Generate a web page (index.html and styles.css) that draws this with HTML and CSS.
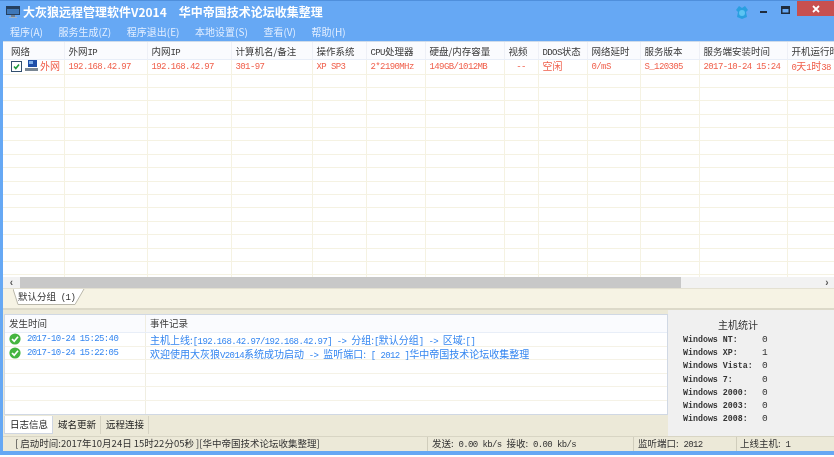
FILE: index.html
```html
<!DOCTYPE html>
<html lang="zh-CN">
<head>
<meta charset="utf-8">
<title>大灰狼远程管理软件V2014</title>
<link rel="stylesheet" href="styles.css">
</head>
<body>
<div class="window">
  <header class="titlebar">
    <svg class="logo" width="14" height="12" viewBox="0 0 14 12"><rect x="0" y="0" width="14" height="9" fill="#26405f"/><rect x="1" y="3" width="12" height="5" fill="#3f78b8"/><rect x="5" y="9" width="4" height="2" fill="#6d7f92"/><rect x="3" y="11" width="8" height="1" fill="#9fb1c4"/></svg>
    <span class="title">大灰狼远程管理软件V2014　华中帝国技术论坛收集整理</span>
    <div class="controls">
      <svg class="skin" width="14" height="15" viewBox="0 0 14 15"><path d="M4 1 L7 3 L10 1 L13 5 L11 7 L12 12 L7 14 L2 12 L3 7 L1 5 Z" fill="#2a9fe0"/><circle cx="7" cy="8" r="3" fill="#5cc4f2"/></svg>
      <svg class="min" width="7" height="2" viewBox="0 0 7 2"><rect width="7" height="2" fill="#1f2c3d"/></svg>
      <svg class="max" width="9" height="8" viewBox="0 0 9 8"><rect x=".75" y=".75" width="7.5" height="6.5" fill="none" stroke="#1f2c3d" stroke-width="1.5"/><rect x="1" y="1" width="7" height="2" fill="#1f2c3d"/></svg>
      <div class="close"><svg width="8" height="8" viewBox="0 0 8 8"><path d="M1 1 L7 7 M7 1 L1 7" stroke="#fff" stroke-width="1.8"/></svg></div>
    </div>
  </header>
  <nav class="menubar">
    <span>程序(A)</span><span>服务生成(Z)</span><span>程序退出(E)</span><span>本地设置(S)</span><span>查看(V)</span><span>帮助(H)</span>
  </nav>
  <main class="content">
    <div class="host-area">
      <table class="grid">
        <colgroup>
          <col class="c1"><col class="c2"><col class="c3"><col class="c4"><col class="c5"><col class="c6"><col class="c7"><col class="c8"><col class="c9"><col class="c10"><col class="c11"><col class="c12"><col class="c13">
        </colgroup>
        <thead>
          <tr><th class="first">网络</th><th>外网<i>IP</i></th><th>内网<i>IP</i></th><th>计算机名/备注</th><th>操作系统</th><th><i>CPU</i>处理器</th><th>硬盘/内存容量</th><th>视频</th><th><i>DDOS</i>状态</th><th>网络延时</th><th>服务版本</th><th>服务端安装时间</th><th>开机运行时间</th></tr>
        </thead>
        <tbody>
          <tr class="online">
            <td class="net"><svg class="cb" width="11" height="11" viewBox="0 0 11 11"><rect x=".5" y=".5" width="10" height="10" fill="#fff" stroke="#33506e"/><path d="M3 5.5 L4.8 7.6 L8 3.5" fill="none" stroke="#1f9a3c" stroke-width="1.6"/></svg><svg class="pc" width="13" height="12" viewBox="0 0 13 12"><rect x="3" y="0" width="9" height="7" fill="#1f4fa8"/><rect x="4" y="1" width="4" height="3" fill="#7fb0ea"/><rect x="0" y="8" width="13" height="3" fill="#7a8793"/></svg><b>外网</b></td>
            <td>192.168.42.97</td><td>192.168.42.97</td><td>301-97</td><td>XP SP3</td><td>2*2190MHz</td><td>149GB/1012MB</td><td class="ctr">--</td><td><b>空闲</b></td><td>0/mS</td><td>S_120305</td><td>2017-10-24 15:24</td><td>0<b>天</b>1<b>时</b>38</td>
          </tr>
          <tr><td></td><td></td><td></td><td></td><td></td><td></td><td></td><td></td><td></td><td></td><td></td><td></td><td></td></tr>
          <tr><td></td><td></td><td></td><td></td><td></td><td></td><td></td><td></td><td></td><td></td><td></td><td></td><td></td></tr>
          <tr><td></td><td></td><td></td><td></td><td></td><td></td><td></td><td></td><td></td><td></td><td></td><td></td><td></td></tr>
          <tr><td></td><td></td><td></td><td></td><td></td><td></td><td></td><td></td><td></td><td></td><td></td><td></td><td></td></tr>
          <tr><td></td><td></td><td></td><td></td><td></td><td></td><td></td><td></td><td></td><td></td><td></td><td></td><td></td></tr>
          <tr><td></td><td></td><td></td><td></td><td></td><td></td><td></td><td></td><td></td><td></td><td></td><td></td><td></td></tr>
          <tr><td></td><td></td><td></td><td></td><td></td><td></td><td></td><td></td><td></td><td></td><td></td><td></td><td></td></tr>
          <tr><td></td><td></td><td></td><td></td><td></td><td></td><td></td><td></td><td></td><td></td><td></td><td></td><td></td></tr>
          <tr><td></td><td></td><td></td><td></td><td></td><td></td><td></td><td></td><td></td><td></td><td></td><td></td><td></td></tr>
          <tr><td></td><td></td><td></td><td></td><td></td><td></td><td></td><td></td><td></td><td></td><td></td><td></td><td></td></tr>
          <tr><td></td><td></td><td></td><td></td><td></td><td></td><td></td><td></td><td></td><td></td><td></td><td></td><td></td></tr>
          <tr><td></td><td></td><td></td><td></td><td></td><td></td><td></td><td></td><td></td><td></td><td></td><td></td><td></td></tr>
          <tr><td></td><td></td><td></td><td></td><td></td><td></td><td></td><td></td><td></td><td></td><td></td><td></td><td></td></tr>
          <tr><td></td><td></td><td></td><td></td><td></td><td></td><td></td><td></td><td></td><td></td><td></td><td></td><td></td></tr>
          <tr><td></td><td></td><td></td><td></td><td></td><td></td><td></td><td></td><td></td><td></td><td></td><td></td><td></td></tr>
          <tr><td></td><td></td><td></td><td></td><td></td><td></td><td></td><td></td><td></td><td></td><td></td><td></td><td></td></tr>
        </tbody>
      </table>
    </div>
    <div class="hscroll">
      <span class="arrow">‹</span>
      <div class="thumb"></div>
      <span class="arrow right">›</span>
    </div>
    <div class="group-tabs">
      <div class="group-tab">
        <svg class="tab-shape" width="72" height="17" viewBox="0 0 72 17"><path d="M0 0 L5 15.5 L62 15.5 L71 0" fill="#fff" stroke="#b9b7aa"/></svg>
        <span class="tab-label">默认分组<i> (1)</i></span>
      </div>
    </div>
    <section class="lower">
      <div class="log-col">
        <div class="log-box">
          <div class="log-row log-head"><span class="when">发生时间</span><span class="what">事件记录</span></div>
          <div class="log-row entry">
            <span class="when"><svg width="12" height="12" viewBox="0 0 12 12"><circle cx="6" cy="6" r="5.6" fill="#45b53f"/><path d="M3 6 L5.2 8.2 L9 3.8" fill="none" stroke="#fff" stroke-width="1.7"/></svg><i>2017-10-24 15:25:40</i></span>
            <span class="what">主机上线:<i>[192.168.42.97/192.168.42.97] -&gt; </i>分组:<i>[</i>默认分组<i>] -&gt; </i>区域:<i>[]</i></span>
          </div>
          <div class="log-row entry">
            <span class="when"><svg width="12" height="12" viewBox="0 0 12 12"><circle cx="6" cy="6" r="5.6" fill="#45b53f"/><path d="M3 6 L5.2 8.2 L9 3.8" fill="none" stroke="#fff" stroke-width="1.7"/></svg><i>2017-10-24 15:22:05</i></span>
            <span class="what">欢迎使用大灰狼<i>V2014</i>系统成功启动<i> -&gt; </i>监听端口:<i> [ 2012 ]</i>华中帝国技术论坛收集整理</span>
          </div>
          <div class="log-row"><span class="when"></span><span class="what"></span></div>
          <div class="log-row"><span class="when"></span><span class="what"></span></div>
          <div class="log-row"><span class="when"></span><span class="what"></span></div>
          <div class="log-row"><span class="when"></span><span class="what"></span></div>
        </div>
        <div class="log-tabs">
          <span class="log-tab active">日志信息</span><span class="log-tab">域名更新</span><span class="log-tab">远程连接</span>
        </div>
      </div>
      <aside class="stats">
        <h2>主机统计</h2>
        <dl>
          <div><dt>Windows NT:</dt><dd>0</dd></div>
          <div><dt>Windows XP:</dt><dd>1</dd></div>
          <div><dt>Windows Vista:</dt><dd>0</dd></div>
          <div><dt>Windows 7:</dt><dd>0</dd></div>
          <div><dt>Windows 2000:</dt><dd>0</dd></div>
          <div><dt>Windows 2003:</dt><dd>0</dd></div>
          <div><dt>Windows 2008:</dt><dd>0</dd></div>
        </dl>
      </aside>
    </section>
    <footer class="status">
      <span class="seg s1">[ 启动时间:2017年10月24日 15时22分05秒 ][华中帝国技术论坛收集整理]</span>
      <span class="seg s2">发送:<i> 0.00 kb/s </i>接收:<i> 0.00 kb/s</i></span>
      <span class="seg s3">监听端口:<i> 2012</i></span>
      <span class="seg s4">上线主机:<i> 1</i></span>
    </footer>
  </main>
</div>
</body>
</html>
```

FILE: styles.css
```css
* { box-sizing: border-box; }
html, body { margin: 0; padding: 0; background: #fff; }
body { width: 834px; height: 457px; overflow: hidden; font-family: "Noto Sans CJK SC", "Liberation Sans", sans-serif; font-size: 9.5px; color: #333; }
i { font-style: normal; font-family: "Liberation Mono", monospace; font-size: 9px; letter-spacing: -0.6px; white-space: pre; }

.window { width: 834px; height: 455px; display: flex; flex-direction: column; background: #66a8f4; border-top: 1px solid #4f8fdc; padding-bottom: 4px; filter: blur(0.55px); }

.titlebar { height: 20px; flex: none; display: flex; align-items: center; padding-left: 6px; color: #fff; }
.logo { flex: none; margin-right: 3px; margin-top: 1px; }
.title { font-size: 12px; font-weight: 700; line-height: 20px; margin-top: 1px; white-space: nowrap; }
.controls { margin-left: auto; align-self: flex-start; display: flex; align-items: flex-start; }
.skin { margin-top: 4px; margin-right: 11px; }
.min { margin-top: 10px; margin-right: 14px; }
.max { margin-top: 5px; margin-right: 7px; }
.close { width: 37px; height: 15px; background: #c75050; display: flex; align-items: center; justify-content: center; }

.menubar { height: 20px; flex: none; display: flex; gap: 15.6px; align-items: center; padding-left: 10px; color: #e2eeff; font-size: 10px; }

.content { flex: 1; min-height: 0; margin-left: 3px; display: flex; flex-direction: column; background: #ece9d8; border-top: 1px solid #cfdceb; }

.host-area { height: 235px; flex: none; overflow: hidden; background: #fff; }
.grid { border-collapse: collapse; table-layout: fixed; width: 871px; }
.c1 { width: 61px; } .c2 { width: 83px; } .c3 { width: 84px; } .c4 { width: 81px; } .c5 { width: 54px; } .c6 { width: 59px; } .c7 { width: 79px; } .c8 { width: 34px; } .c9 { width: 49px; } .c10 { width: 53px; } .c11 { width: 59px; } .c12 { width: 88px; } .c13 { width: 87px; }
.grid th { height: 17px; padding: 1px 0 0 4px; font-weight: 400; font-size: 9.5px; text-align: left; white-space: nowrap; overflow: hidden; background: #fafbfe; border-right: 1px solid #eef0f6; border-bottom: 1px solid #e8eef8; color: #3a3a3a; }
.grid .first { padding-left: 8px; }
.grid td { height: 13.4px; padding: 0 0 0 4px; border-right: 1px solid #f5f2e2; border-bottom: 1px solid #f5f2e2; white-space: nowrap; overflow: hidden; font-family: "Liberation Mono", monospace; font-size: 9px; letter-spacing: -0.6px; line-height: 12px; }
.online td { color: #f0604c; }
.online b { font-family: "Noto Sans CJK SC", sans-serif; font-weight: 400; font-size: 10px; letter-spacing: 0; }
.grid .ctr { text-align: center; padding-left: 0; }
.grid .net { padding-left: 8px; }
.net svg { vertical-align: -2px; }
.cb { margin-right: 3px; }
.pc { margin-right: 2px; }

.hscroll { height: 11px; flex: none; display: flex; align-items: center; background: #f2f2f2; color: #555; font-size: 10px; }
.arrow { width: 17px; flex: none; text-align: center; line-height: 11px; font-family: "Liberation Sans", sans-serif; font-weight: 700; }
.thumb { width: 661px; height: 11px; flex: none; background: #c8c8c8; }
.arrow.right { margin-left: auto; width: 14px; }

.group-tabs { height: 22px; flex: none; padding-left: 10px; background: #f6f3e4; border-top: 1px solid #e4e1d2; border-bottom: 2px solid #dcd9c9; }
.group-tab { width: 72px; height: 17px; display: grid; color: #333; }
.tab-shape, .tab-label { grid-area: 1 / 1; }
.tab-label { line-height: 15px; padding-left: 5px; white-space: nowrap; }

.lower { flex: 1; min-height: 0; display: flex; }
.log-col { width: 665px; flex: none; display: flex; flex-direction: column; padding: 4px 0 0 1px; background: #ece9d8; }
.log-box { height: 101px; flex: none; background: #fff; border: 1px solid #d0d8e4; overflow: hidden; }
.log-row { height: 13.6px; display: flex; border-bottom: 1px solid #f5f2e6; }
.log-head { height: 18px; background: #fafbfe; border-bottom: 1px solid #e8eef8; color: #3a3a3a; line-height: 17px; }
.when { width: 141px; flex: none; height: 100%; padding-left: 4px; display: flex; align-items: center; gap: 6px; border-right: 1px solid #f0eee2; }
.what { flex: 1; padding-left: 4px; white-space: nowrap; line-height: 13px; }
.log-head .what { line-height: 17px; }
.entry { color: #3486f0; font-size: 10px; }
.log-tabs { flex: 1; display: flex; align-items: flex-start; padding-top: 1px; color: #222; }
.log-tab { height: 18px; line-height: 16px; padding: 0 4px 0 5px; border-right: 1px solid #d6d3c3; }
.log-tab.active { background: #fff; border: 1px solid #cfd6e2; border-top: 0; padding: 0 4px 0 5px; }

.stats { flex: 1; background: #f0f0f0; padding: 6px 0 0 15px; color: #333; }
.stats h2 { margin: 2px 0 1px 0; padding-left: 35px; font-size: 10px; line-height: 14px; font-weight: 400; }
.stats dl { margin: 0; }
.stats dl div { height: 13.2px; display: flex; align-items: center; }
.stats dt { width: 79px; font-family: "Liberation Mono", monospace; font-size: 8.3px; font-weight: 700; white-space: nowrap; }
.stats dd { margin: 0; font-family: "Liberation Mono", monospace; font-size: 9.5px; }

.status { height: 15px; flex: none; display: flex; gap: 2px; background: #ece9d8; color: #333; border-top: 1px solid #d8d5c4; }
.seg { height: 14px; line-height: 13px; white-space: nowrap; border-right: 1px solid #d0cdbc; }
.s1 { width: 425px; padding-left: 12px; }
.s2 { width: 204px; padding-left: 2px; }
.s3 { width: 101px; padding-left: 2px; }
.s4 { flex: 1; padding-left: 1px; border-right: 0; }
```
